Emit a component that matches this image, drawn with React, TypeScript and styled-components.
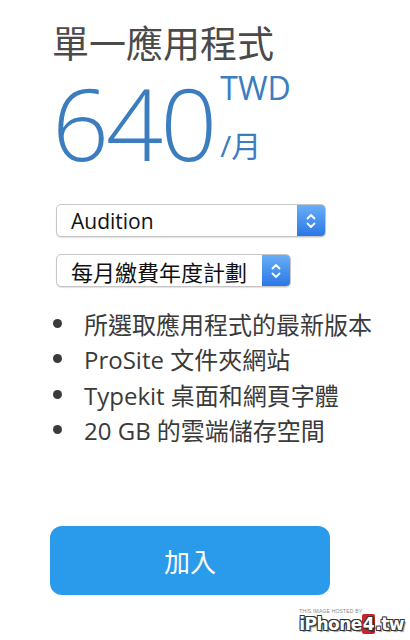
import React from 'react';
import styled, {createGlobalStyle} from 'styled-components';

const GlobalStyle = createGlobalStyle`
  html, body {
    margin: 0;
    padding: 0;
    background: #ffffff;
  }
  body {
    font-family: "Open Sans", "Noto Sans CJK TC", sans-serif;
  }
`

const Page = styled.div`
  position: relative;
  width: 410px;
  height: 640px;
  overflow: hidden;
  padding: 22px 0 0 52px;
  box-sizing: border-box;
`

const Title = styled.h1`
  margin: 0;
  font-size: 37px;
  line-height: 44px;
  font-weight: 400;
  color: #4a4a4a;
`

const PriceRow = styled.div`
  display: flex;
  align-items: flex-start;
  margin-top: 6px;
  color: #3b7dbf;
`

const Amount = styled.div`
  font-family: "Open Sans", sans-serif;
  font-size: 100px;
  font-weight: 300;
  line-height: 100px;
  letter-spacing: -3px;
`

const PriceSide = styled.div`
  display: flex;
  flex-direction: column;
  margin-left: 6px;
`

const Currency = styled.div`
  font-size: 32px;
  font-weight: 500;
  line-height: 36px;
  margin-top: -2px;
`

const PerMonth = styled.div`
  font-size: 30px;
  line-height: 36px;
  margin-top: 22px;
`

const Selects = styled.div`
  display: flex;
  flex-direction: column;
  align-items: flex-start;
  gap: 17px;
  margin: 32px 0 0 4px;
`

const Select = styled.div<{ $width: number }>`
  display: flex;
  align-items: stretch;
  width: ${p => p.$width}px;
  height: 33px;
  box-sizing: border-box;
  border: 1px solid #c6c6c6;
  border-radius: 5px;
  background: #fff;
  box-shadow: 0 1px 1px rgba(0, 0, 0, 0.12);
  overflow: hidden;
`

const SelectLabel = styled.div<{ $size: number }>`
  flex: 1;
  display: flex;
  align-items: center;
  padding-left: 14px;
  font-size: ${p => p.$size}px;
  color: #111;
`

const Stepper = styled.div`
  width: 28px;
  display: flex;
  align-items: center;
  justify-content: center;
  background: linear-gradient(#69aef7, #2a78e6);
`

const Features = styled.ul`
  list-style: none;
  margin: 19px 0 0 0;
  padding: 0;
`

const Feature = styled.li`
  display: flex;
  align-items: center;
  height: 35.3px;
  font-size: 24px;
  color: #3a3a3a;
  &::before {
    content: "";
    width: 9px;
    height: 9px;
    border-radius: 50%;
    background: #3a3a3a;
    margin: 0 22px 0 1px;
  }
`

const JoinButton = styled.button`
  display: flex;
  align-items: center;
  justify-content: center;
  width: 280px;
  height: 69px;
  margin: 79px 0 0 -2px;
  border: none;
  border-radius: 12px;
  background: #2a9bea;
  color: #fff;
  font-family: "Noto Sans CJK TC", sans-serif;
  font-size: 26px;
  cursor: pointer;
`

const Watermark = styled.div`
  position: absolute;
  right: 6px;
  bottom: 6px;
  display: flex;
  flex-direction: column;
  align-items: flex-start;
`

const HostedBy = styled.span`
  font-family: "Liberation Sans", sans-serif;
  font-size: 5px;
  color: #888;
  letter-spacing: 0.2px;
`

const Logo = styled.span`
  font-family: "DejaVu Sans", sans-serif;
  font-size: 17px;
  font-weight: bold;
  line-height: 20px;
  color: #fff;
  letter-spacing: -0.5px;
  text-shadow: -1px -1px 0 #333, 1px -1px 0 #333, -1px 1px 0 #333, 1px 1px 0 #333, 2px 2px 1px rgba(0,0,0,0.4);
`

const LogoFour = styled.span`
  background: #c8242b;
  padding: 0 1px;
  border-radius: 2px;
`

const Chevrons = () => (
  <svg width="12" height="18" viewBox="0 0 12 18" fill="none" stroke="#fff" strokeWidth="1.8" strokeLinecap="round" strokeLinejoin="round">
    <path d="M2.5 6.5 L6 3 L9.5 6.5"/>
    <path d="M2.5 11.5 L6 15 L9.5 11.5"/>
  </svg>
)

const features = [
  '所選取應用程式的最新版本',
  'ProSite 文件夾網站',
  'Typekit 桌面和網頁字體',
  '20 GB 的雲端儲存空間',
]

export default function App() {
  return (
    <Page>
      <GlobalStyle/>
      <Title>單一應用程式</Title>
      <PriceRow>
        <Amount>640</Amount>
        <PriceSide>
          <Currency>TWD</Currency>
          <PerMonth>/月</PerMonth>
        </PriceSide>
      </PriceRow>
      <Selects>
        <Select $width={270}>
          <SelectLabel $size={21}>Audition</SelectLabel>
          <Stepper><Chevrons/></Stepper>
        </Select>
        <Select $width={235}>
          <SelectLabel $size={22}>每月繳費年度計劃</SelectLabel>
          <Stepper><Chevrons/></Stepper>
        </Select>
      </Selects>
      <Features>
        {features.map(f => <Feature key={f}>{f}</Feature>)}
      </Features>
      <JoinButton>加入</JoinButton>
      <Watermark>
        <HostedBy>THIS IMAGE HOSTED BY</HostedBy>
        <Logo>iPhone<LogoFour>4</LogoFour>.tw</Logo>
      </Watermark>
    </Page>
  )
}
